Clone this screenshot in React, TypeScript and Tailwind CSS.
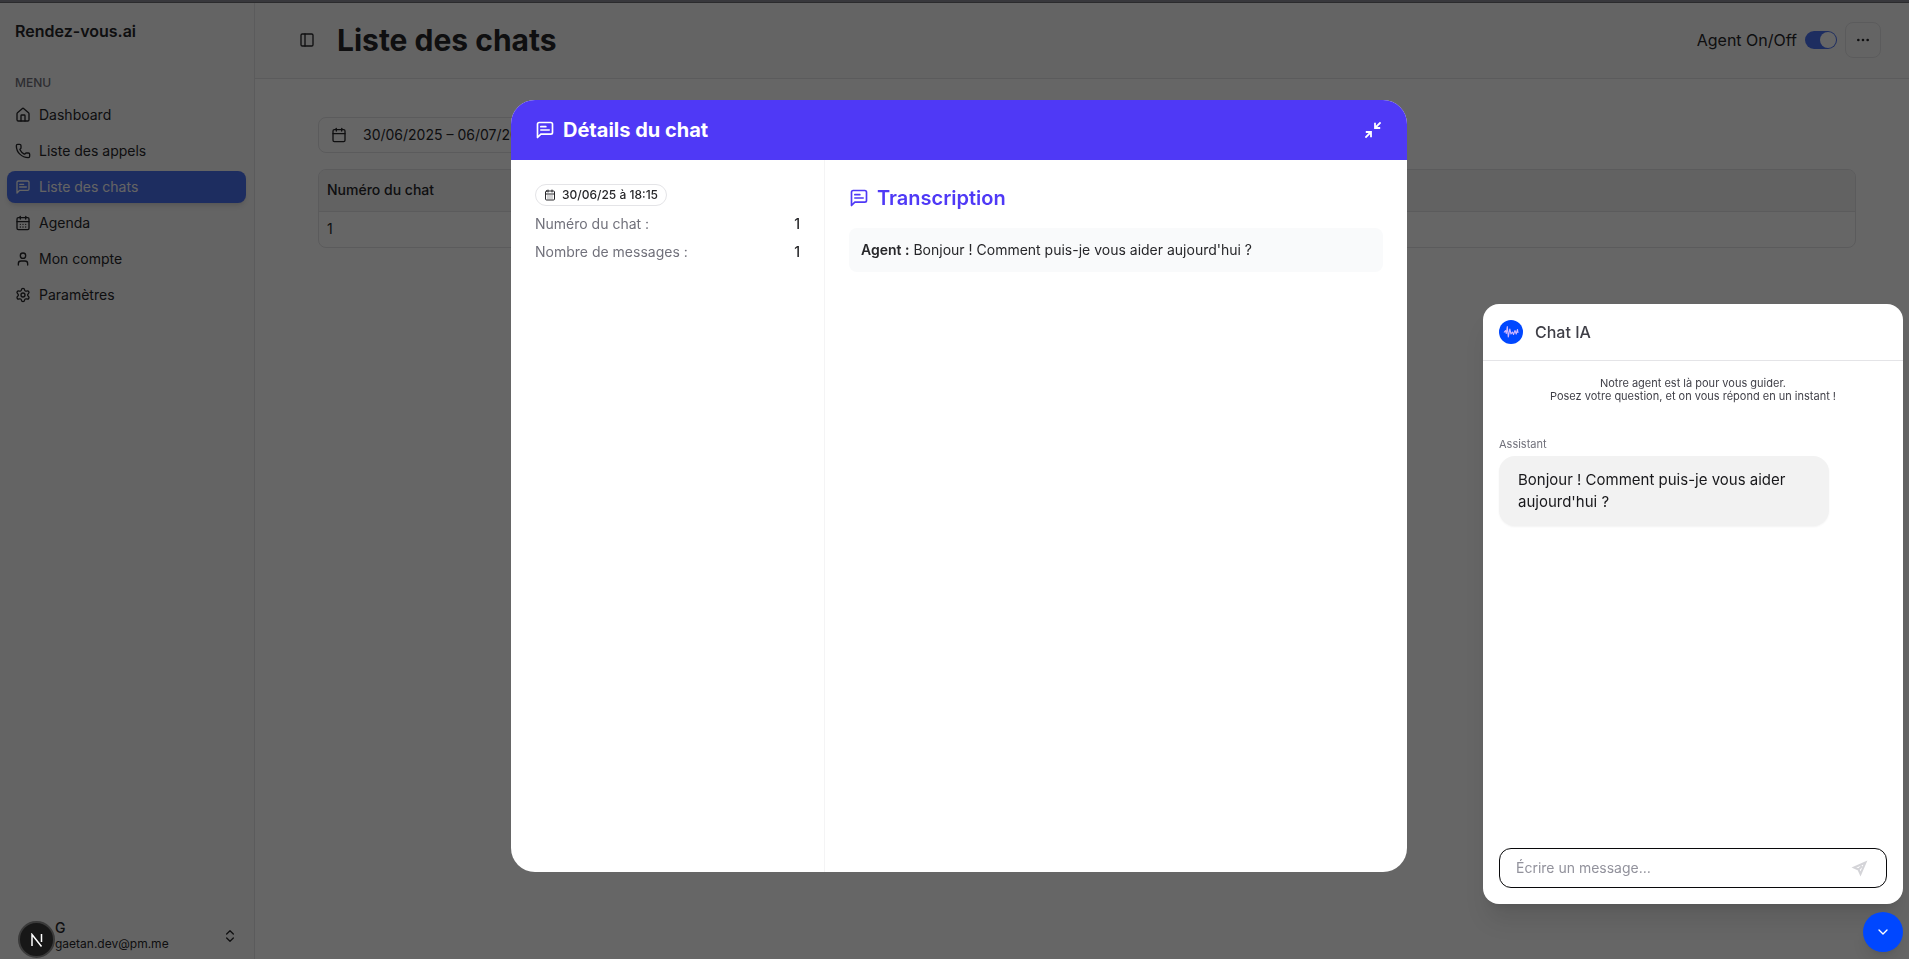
import type { ReactNode } from 'react'
import { Calendar, CalendarDays, ChevronDown, ChevronsUpDown, Ellipsis, House, PanelLeft, Phone, Settings, User } from 'lucide-react'

function ChatIcon({ className = '' }: { className?: string }) {
  return (
    <svg viewBox="0 0 24 24" fill="none" stroke="currentColor" strokeWidth="2" strokeLinecap="round" strokeLinejoin="round" className={className}>
      <path d="M21 15a2 2 0 0 1-2 2H7l-4 4V5a2 2 0 0 1 2-2h14a2 2 0 0 1 2 2z" />
      <path d="M13 8H7" />
      <path d="M17 12H7" />
    </svg>
  )
}

interface NavItem {
  label: string
  icon: ReactNode
  active?: boolean
}

const navItems: NavItem[] = [
  { label: 'Dashboard', icon: <House className="size-4" /> },
  { label: 'Liste des appels', icon: <Phone className="size-4" /> },
  { label: 'Liste des chats', icon: <ChatIcon className="size-4" />, active: true },
  { label: 'Agenda', icon: <CalendarDays className="size-4" /> },
  { label: 'Mon compte', icon: <User className="size-4" /> },
  { label: 'Paramètres', icon: <Settings className="size-4" /> }
]

function Sidebar() {
  return (
    <aside className="flex w-[255px] shrink-0 flex-col border-r border-zinc-200 bg-zinc-50">
      <div className="px-[15px] pt-4 text-base leading-6 font-semibold">Rendez-vous.ai</div>
      <div className="px-[15px] pt-8 text-xs leading-4 font-medium text-zinc-500">MENU</div>
      <nav className="flex flex-col gap-1 pt-2 pr-2 pl-[7px]">
        {navItems.map((item) => (
          <a
            key={item.label}
            href="#"
            className={`flex h-8 items-center gap-2 rounded-lg px-2 text-sm ${item.active ? 'bg-[#4a70f0] text-zinc-50 shadow-md' : ''}`}
          >
            {item.icon}
            {item.label}
          </a>
        ))}
      </nav>
      <div className="mt-auto flex h-[46px] items-center justify-between pr-4 pl-[55px]">
        <div>
          <div className="text-sm leading-4 font-medium">G</div>
          <div className="text-xs leading-4">gaetan.dev@pm.me</div>
        </div>
        <ChevronsUpDown className="size-4" />
      </div>
    </aside>
  )
}

function PageHeader() {
  return (
    <header className="flex h-[76px] items-center border-b border-zinc-200 bg-zinc-50 pr-7 pb-0.5 pl-11">
      <button type="button" aria-label="Menu">
        <PanelLeft className="size-4" />
      </button>
      <h1 className="ml-[22px] text-3xl font-bold">Liste des chats</h1>
      <div className="ml-auto flex items-center gap-2">
        <label htmlFor="agent" className="text-base">
          Agent On/Off
        </label>
        <input
          id="agent"
          type="checkbox"
          role="switch"
          defaultChecked
          className="h-[18px] w-8 appearance-none rounded-full bg-zinc-300 before:block before:size-4 before:translate-y-px before:rounded-full before:bg-white checked:bg-[#4a70f0] checked:before:translate-x-[15px]"
        />
        <button type="button" aria-label="Options" className="flex size-9 items-center justify-center rounded-lg border border-zinc-200">
          <Ellipsis className="size-4" />
        </button>
      </div>
    </header>
  )
}

function ChatTable() {
  return (
    <main className="pt-[38px] pr-[53px] pl-[63px]">
      <button type="button" className="flex h-9 w-70 items-center gap-4 rounded-lg border border-zinc-200 px-3 text-sm">
        <Calendar className="size-4" />
        30/06/2025 – 06/07/2025
      </button>
      <div className="mt-4 overflow-hidden rounded-lg border border-zinc-200">
        <table className="w-full text-left text-sm">
          <thead>
            <tr className="h-[41px] border-b border-zinc-200 bg-zinc-100">
              <th className="px-2 font-medium">Numéro du chat</th>
            </tr>
          </thead>
          <tbody>
            <tr className="h-9">
              <td className="px-2">1</td>
            </tr>
          </tbody>
        </table>
      </div>
    </main>
  )
}

function ChatDetails() {
  return (
    <div className="fixed inset-0 flex justify-center bg-black/60 pt-[100px] pb-[87px] pl-[9px]">
      <div role="dialog" aria-labelledby="details" className="flex h-full w-full max-w-4xl flex-col overflow-hidden rounded-3xl bg-white">
        <div className="flex h-15 shrink-0 items-center gap-2 bg-[#4f39f6] px-6 text-white">
          <ChatIcon className="size-5" />
          <h2 id="details" className="text-xl font-bold">
            Détails du chat
          </h2>
          <button type="button" aria-label="Réduire" className="ml-auto">
            <svg viewBox="0 0 20 20" fill="none" stroke="currentColor" strokeWidth="1.8" className="size-5">
              <path d="M17.6 2.400 12 8M12 2.800V8H17.200" />
              <path d="M2.400 17.600 8 12M2.800 12H8V17.200" />
            </svg>
          </button>
        </div>
        <div className="flex flex-1">
          <div className="w-[314px] border-r border-zinc-100 p-6">
            <div className="flex h-[22px] w-fit items-center gap-1.5 rounded-full border border-zinc-200 px-2 text-xs font-medium">
              <CalendarDays className="size-3" />
              30/06/25 à 18:15
            </div>
            <dl className="mt-2 flex flex-col gap-2 text-sm">
              <div className="flex justify-between">
                <dt className="text-zinc-500">Numéro du chat :</dt>
                <dd className="font-medium">1</dd>
              </div>
              <div className="flex justify-between">
                <dt className="text-zinc-500">Nombre de messages :</dt>
                <dd className="font-medium">1</dd>
              </div>
            </dl>
          </div>
          <div className="flex-1 p-6">
            <h3 className="flex items-center gap-2 text-xl font-semibold text-[#4f39f6]">
              <ChatIcon className="size-5" />
              Transcription
            </h3>
            <p className="mt-4 rounded-lg bg-[#f9fafb] p-3 text-sm">
              <strong className="font-semibold">Agent :</strong> Bonjour ! Comment puis-je vous aider aujourd'hui ?
            </p>
          </div>
        </div>
      </div>
    </div>
  )
}

function ChatWidget() {
  return (
    <div className="fixed right-1.5 bottom-[7px] flex flex-col items-end gap-2">
      <section className="flex h-[600px] w-[420px] flex-col rounded-2xl bg-white shadow-xl">
        <div className="flex h-[57px] items-center gap-3 border-b border-zinc-200 px-4">
          <svg viewBox="0 0 24 24" className="size-6">
            <circle cx="12" cy="12" r="12" fill="#0047ff" />
            <path
              d="M5 12.500 6.500 10.500 7.300 13.500 8.300 6.500 9.300 17 10.800 9 12 14 13.500 12 14.500 14.500 16 10.500 17.200 14 18.500 9.500 19 13"
              stroke="#d3b8ff"
              strokeWidth="1.1"
              strokeLinejoin="round"
              fill="none"
            />
          </svg>
          <h2 className="text-base font-medium text-zinc-700">Chat IA</h2>
        </div>
        <p className="px-4 pt-4 text-center text-[11px] leading-[13px] text-zinc-700">
          Notre agent est là pour vous guider.
          <br />
          Posez votre question, et on vous répond en un instant !
        </p>
        <div className="flex flex-1 flex-col items-start px-4 pt-[33px]">
          <div className="text-[11px] leading-4 text-zinc-500">Assistant</div>
          <div className="mt-1 w-[330px] rounded-2xl bg-[#f2f2f2] px-[19px] py-[13px] text-[15px] leading-[22px] text-zinc-900 shadow-xs">
            Bonjour ! Comment puis-je vous aider aujourd'hui ?
          </div>
        </div>
        <form className="m-4 flex h-10 items-center rounded-xl border border-zinc-950 px-4">
          <input aria-label="Message" placeholder="Écrire un message…" className="min-w-0 flex-1 text-sm outline-none placeholder:text-[#92929c]" />
          <button type="button" aria-label="Envoyer" className="text-zinc-300">
            <svg viewBox="0 0 20 20" fill="none" stroke="currentColor" strokeWidth="2" className="size-5">
              <path d="M15.500 4.500 4 9.500 8.500 11.500 10.500 16ZM8.500 11.500 12 8" />
            </svg>
          </button>
        </form>
      </section>
      <button type="button" aria-label="Fermer le chat" className="flex size-10 items-center justify-center rounded-full bg-[#0047ff] text-white shadow-lg">
        <ChevronDown className="size-4" />
      </button>
    </div>
  )
}

export default function App() {
  return (
    <div className="flex min-h-screen flex-col bg-white font-['Inter',sans-serif] text-zinc-800">
      <div className="h-[3px] border-b border-[#6b6b72] bg-[#8c8c96]"></div>
      <div className="flex flex-1">
        <Sidebar />
        <div className="flex-1">
          <PageHeader />
          <ChatTable />
        </div>
      </div>
      <ChatDetails />
      <ChatWidget />
      <button type="button" aria-label="Next.js" className="fixed bottom-px left-[18px] flex size-[37px] items-center justify-center rounded-full border-2 border-[#3a3a3a] bg-[#171717] text-white">
        <svg viewBox="0 0 14 14" fill="none" stroke="currentColor" strokeWidth="1.500" className="size-3.5">
          <path d="M2 13V1.500L11.500 13.500M11.500 1V9" />
        </svg>
      </button>
    </div>
  )
}
